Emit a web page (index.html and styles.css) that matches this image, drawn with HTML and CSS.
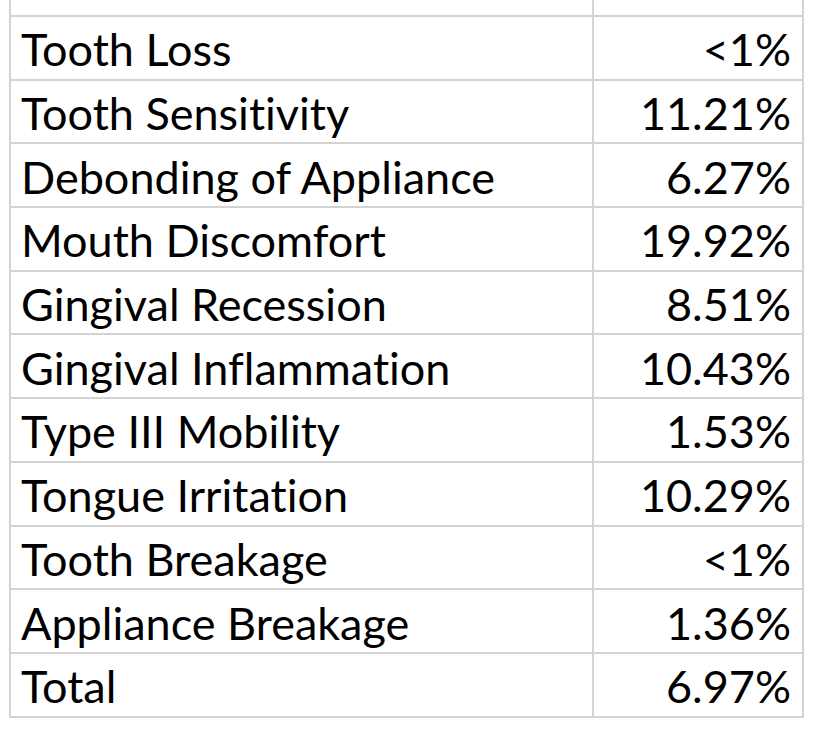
FILE: index.html
```html
<!DOCTYPE html>
<html>
<head>
<meta charset="utf-8">
<link rel="stylesheet" href="styles.css">
</head>
<body>
<table class="grid">
  <colgroup><col class="c-label"><col class="c-value"></colgroup>
  <tr class="stub"><td></td><td></td></tr>
  <tr><td class="label">Tooth Loss</td><td class="value">&lt;1%</td></tr>
  <tr><td class="label">Tooth Sensitivity</td><td class="value">11.21%</td></tr>
  <tr><td class="label">Debonding of Appliance</td><td class="value">6.27%</td></tr>
  <tr><td class="label">Mouth Discomfort</td><td class="value">19.92%</td></tr>
  <tr><td class="label">Gingival Recession</td><td class="value">8.51%</td></tr>
  <tr><td class="label">Gingival Inflammation</td><td class="value">10.43%</td></tr>
  <tr><td class="label">Type III Mobility</td><td class="value">1.53%</td></tr>
  <tr><td class="label">Tongue Irritation</td><td class="value">10.29%</td></tr>
  <tr><td class="label">Tooth Breakage</td><td class="value">&lt;1%</td></tr>
  <tr><td class="label">Appliance Breakage</td><td class="value">1.36%</td></tr>
  <tr><td class="label">Total</td><td class="value">6.97%</td></tr>
</table>
</body>
</html>
```
FILE: styles.css
```css
html, body {
  margin: 0;
  padding: 0;
  background: #ffffff;
}
.grid {
  margin-left: 9px;
  width: 795px;
  border-collapse: collapse;
  table-layout: fixed;
  font-family: "Lato", "Open Sans", sans-serif;
  font-size: 45px;
  font-variant-ligatures: none;
  color: #000000;
}
.c-label { width: 583px; }
.grid td {
  border: 2px solid #d3d3d3;
  height: 63.7px;
  padding: 3px 11px 0 10px;
  box-sizing: border-box;
  line-height: 58px;
  white-space: nowrap;
}
.grid tr.stub td {
  border-top: none;
  height: 16px;
  line-height: 14px;
  padding: 0;
}
.value { text-align: right; }
```
